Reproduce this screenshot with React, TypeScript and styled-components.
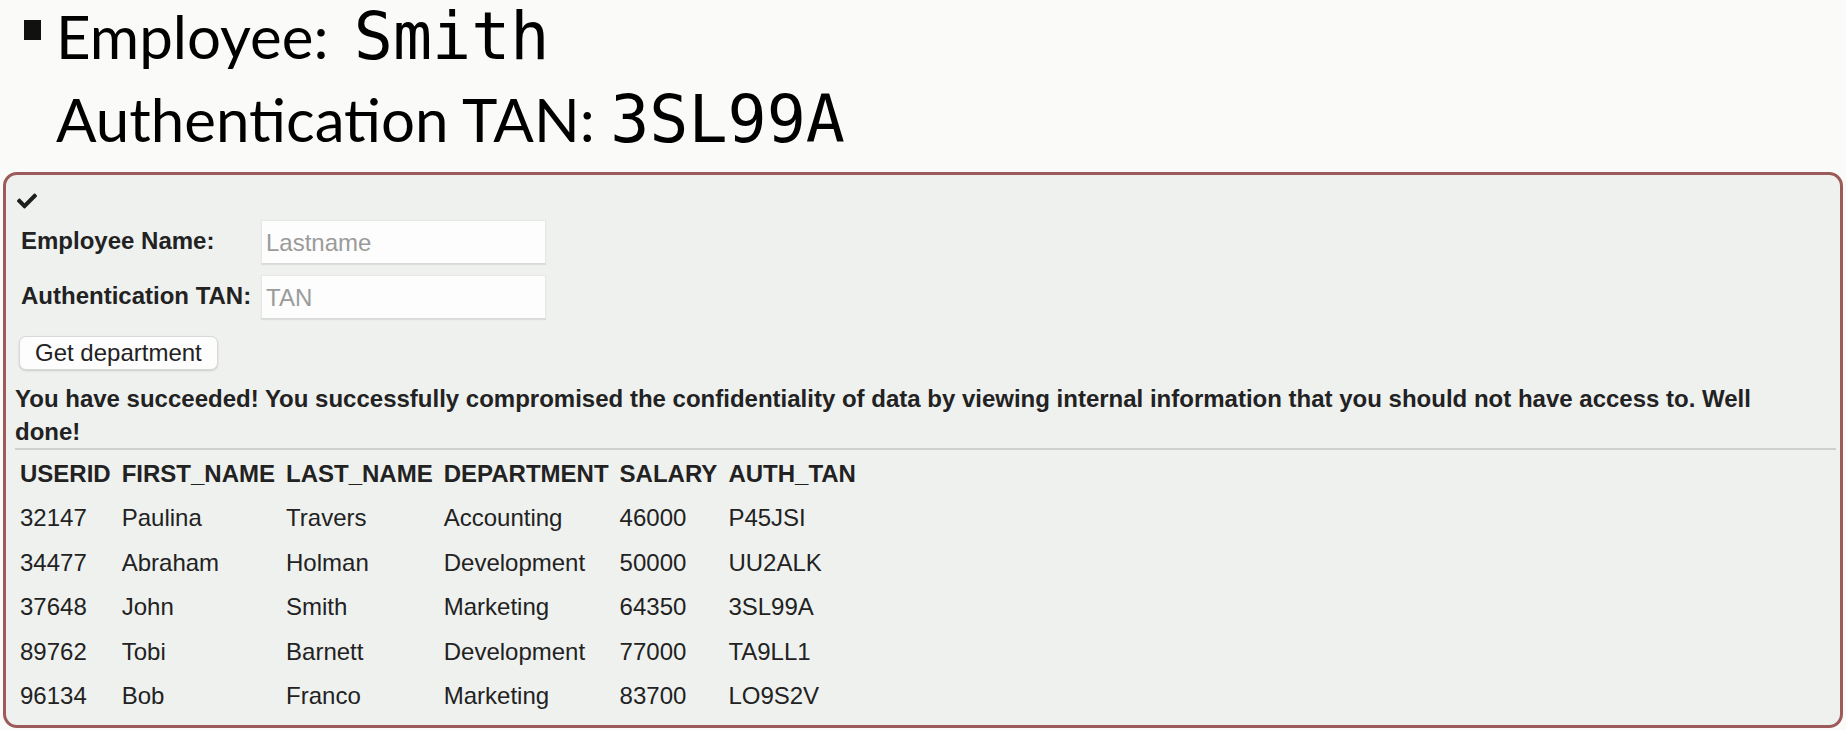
import React from "react";
import styled, { createGlobalStyle } from "styled-components";
import { FaCheck } from "react-icons/fa";

const GlobalStyle = createGlobalStyle`
  html, body { margin: 0; padding: 0; background: #fafbf9; }
  body { font-family: "Liberation Sans", Arial, sans-serif; color: #222; }
  * { box-sizing: border-box; }
`;

const Page = styled.div`
  width: 1846px;
  height: 730px;
  overflow: hidden;
  background: #fafbf9;
`;

const Heading = styled.div`
  display: flex;
  align-items: flex-start;
  gap: 15px;
  padding-left: 24px;
`;

const Bullet = styled.span`
  display: block;
  width: 17px;
  height: 20px;
  margin-top: 20px;
  background: #111;
`;

const Lines = styled.div`
  display: flex;
  flex-direction: column;
  gap: 10px;
`;

const Line = styled.div`
  font-family: Lato, "Open Sans", sans-serif;
  font-size: 60px;
  line-height: 72px;
  color: #000;
  white-space: nowrap;
`;

const Mono = styled.span<{ $shift?: number }>`
  font-family: "DejaVu Sans Mono", "Liberation Mono", monospace;
  font-size: 65px;
  margin-left: ${(p) => p.$shift ?? 0}px;
`;

const Box = styled.section`
  margin: 16px 3px 0;
  border: 3px solid #9c5a5a;
  border-radius: 14px;
  background: #eff1ef;
  padding: 16px 4px 6px 9px;
`;

const CheckWrap = styled.div`
  line-height: 0;
  padding-left: 2px;
  color: #1e1e1e;
`;

const FormRow = styled.div<{ $first?: boolean }>`
  display: flex;
  align-items: center;
  height: 44px;
  margin-top: ${(p) => (p.$first ? "9px" : "11px")};
`;

const Label = styled.label`
  width: 246px;
  padding-left: 6px;
  padding-bottom: 3px;
  font-weight: bold;
  font-size: 24px;
  color: #222;
  white-space: nowrap;
`;

const Input = styled.input`
  width: 285px;
  height: 44px;
  border: 1px solid #e7e8e6;
  border-bottom-color: #d9dad8;
  background: #fcfdfc;
  box-shadow: 0 1px 1px rgba(0, 0, 0, 0.08);
  padding: 2px 4px 0;
  font-family: "Liberation Sans", Arial, sans-serif;
  font-size: 24px;
  color: #222;
  outline: none;
  &::placeholder { color: #9b9b9b; }
`;

const Button = styled.button`
  display: block;
  margin: 17px 0 0 4px;
  height: 34px;
  padding: 0 15px;
  font-family: "Liberation Sans", Arial, sans-serif;
  font-size: 24px;
  color: #222;
  background: #fdfdfd;
  border: 1px solid #d8d9d7;
  border-radius: 7px;
  box-shadow: 0 1px 2px rgba(0, 0, 0, 0.15);
`;

const Success = styled.p`
  margin: 12px 0 0;
  padding-right: 40px;
  font-weight: bold;
  font-size: 24px;
  line-height: 33px;
  color: #222;
`;

const Rule = styled.hr`
  margin: 0 0 1px;
  border: 0;
  border-top: 2px solid #cfd0ce;
`;

const Table = styled.table`
  margin-left: 5px;
  border-collapse: collapse;
  font-size: 24px;
  color: #222;
`;

const Th = styled.th`
  height: 45px;
  padding: 0 11px 0 0;
  text-align: left;
  font-weight: bold;
  white-space: nowrap;
`;

const Td = styled.td`
  height: 44.5px;
  padding: 0 11px 0 0;
  text-align: left;
  white-space: nowrap;
`;

const columns = ["USERID", "FIRST_NAME", "LAST_NAME", "DEPARTMENT", "SALARY", "AUTH_TAN"];

const rows = [
  ["32147", "Paulina", "Travers", "Accounting", "46000", "P45JSI"],
  ["34477", "Abraham", "Holman", "Development", "50000", "UU2ALK"],
  ["37648", "John", "Smith", "Marketing", "64350", "3SL99A"],
  ["89762", "Tobi", "Barnett", "Development", "77000", "TA9LL1"],
  ["96134", "Bob", "Franco", "Marketing", "83700", "LO9S2V"],
];

export default function App() {
  return (
    <Page>
      <GlobalStyle />
      <Heading>
        <Bullet />
        <Lines>
          <Line>
            Employee: <Mono $shift={10}>Smith</Mono>
          </Line>
          <Line>
            Authentication TAN: <Mono>3SL99A</Mono>
          </Line>
        </Lines>
      </Heading>
      <Box>
        <CheckWrap>
          <FaCheck size={20} />
        </CheckWrap>
        <FormRow $first>
          <Label>Employee Name:</Label>
          <Input placeholder="Lastname" />
        </FormRow>
        <FormRow>
          <Label>Authentication TAN:</Label>
          <Input placeholder="TAN" />
        </FormRow>
        <Button>Get department</Button>
        <Success>
          You have succeeded! You successfully compromised the confidentiality of data by viewing internal
          information that you should not have access to. Well done!
        </Success>
        <Rule />
        <Table>
          <thead>
            <tr>
              {columns.map((c) => (
                <Th key={c}>{c}</Th>
              ))}
            </tr>
          </thead>
          <tbody>
            {rows.map((r) => (
              <tr key={r[0]}>
                {r.map((v, i) => (
                  <Td key={i}>{v}</Td>
                ))}
              </tr>
            ))}
          </tbody>
        </Table>
      </Box>
    </Page>
  );
}
